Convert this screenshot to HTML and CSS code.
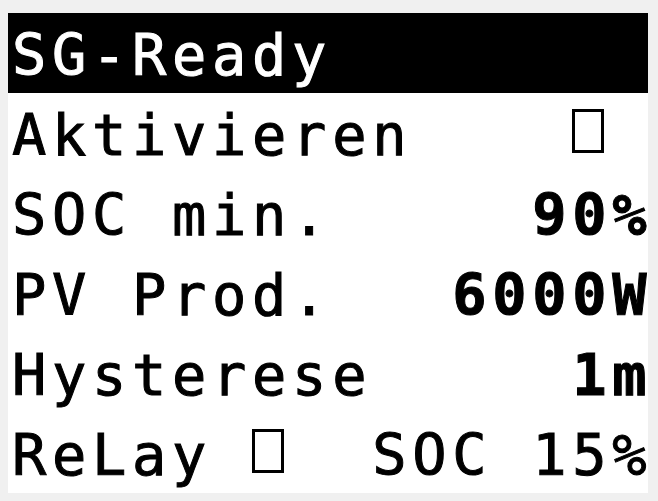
FILE: index.html
```html
<!DOCTYPE html>
<html lang="de">
<head>
<meta charset="utf-8">
<title>SG-Ready</title>
<link rel="stylesheet" href="styles.css">
</head>
<body>
<div class="screen">
<div class="row title">SG-Ready</div>
<div class="row">Aktivieren    <span class="box" role="img" aria-label="☐"></span></div>
<div class="row">SOC min.     <b>90<span class="last">%</span></b></div>
<div class="row">PV Prod.   <b>6000<span class="last">W</span></b></div>
<div class="row">Hysterese     <b>1<span class="last">m</span></b></div>
<div class="row">ReLay <span class="box gap" role="img" aria-label="☐"></span>  SOC 15<span class="last">%</span></div>
</div>
</body>
</html>
```
FILE: styles.css
```css
html, body {
  margin: 0;
  padding: 0;
  background: #f0f0f0;
}
body {
  padding: 13px 0 0 8px;
}
.screen {
  width: 640px;
  height: 480px;
  background: #ffffff;
  color: #000000;
  font-family: "DejaVu Sans Mono", monospace;
  font-size: 57px;
  letter-spacing: 5.7px;
  -webkit-text-stroke: 1px currentColor;
}
.row {
  height: 80px;
  line-height: 84px;
  padding-left: 4px;
  white-space: pre;
}
.title {
  background: #000000;
  color: #ffffff;
}
.row b {
  font-weight: bold;
}
.last {
  letter-spacing: 0;
}
.box {
  display: inline-block;
  box-sizing: border-box;
  width: 32px;
  height: 44px;
  margin: 16px 0 0 0;
  border: 3px solid #000000;
  vertical-align: top;
}
.box.gap {
  margin-right: 8px;
}
```
